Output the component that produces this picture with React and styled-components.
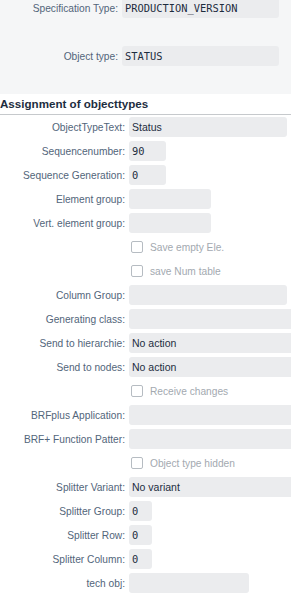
import React from 'react';
import styled, { createGlobalStyle } from 'styled-components';

const GlobalStyle = createGlobalStyle`
  html, body {
    margin: 0;
    padding: 0;
    background: #fff;
    overflow: hidden;
  }
  body {
    font-family: "Liberation Sans", Arial, sans-serif;
    color: #1d2d3e;
  }
`;

const Page = styled.div`
  width: 291px;
  overflow: hidden;
`;

const TopSection = styled.div`
  background: #f5f6f7;
  display: flex;
  flex-direction: column;
  gap: 28px;
  margin-top: -2px;
  padding-bottom: 28px;
`;

const Row = styled.div`
  display: grid;
  grid-template-columns: ${p => p.labelWidth}px auto;
  column-gap: 4px;
  align-items: center;
  height: ${p => p.height || 24}px;
`;

const Label = styled.span`
  font-size: 10.2px;
  color: #52657a;
  text-align: right;
  white-space: nowrap;
`;

const Field = styled.div`
  height: 20px;
  width: ${p => p.w}px;
  background: #ebecee;
  border-radius: 3px;
  box-sizing: border-box;
  padding: 0 3px;
  display: flex;
  align-items: center;
  font-family: ${p => (p.mono ? '"DejaVu Sans Mono", monospace' : '"Liberation Sans", Arial, sans-serif')};
  font-size: ${p => (p.mono ? '10.4px' : '10.5px')};
  color: #1d2d3e;
  white-space: nowrap;
`;

const Header = styled.h2`
  margin: 0;
  height: 21px;
  box-sizing: border-box;
  padding-top: 2px;
  font-size: 11.6px;
  font-weight: bold;
  color: #1d2d3e;
  border-bottom: 1px solid #c6c9cc;
  line-height: 15px;
`;

const Form = styled.div`
  display: flex;
  flex-direction: column;
`;

const CheckWrap = styled.label`
  display: flex;
  align-items: center;
  gap: 7px;
  font-size: 10.2px;
  color: #a3a9b0;
  padding-left: 2px;
`;

const Box = styled.span`
  width: 10px;
  height: 10px;
  border: 1px solid #b6bcc2;
  border-radius: 2px;
  background: #fff;
`;

const fields = [
  { label: 'ObjectTypeText', value: 'Status', w: 158 },
  { label: 'Sequencenumber', value: '90', w: 37, mono: true },
  { label: 'Sequence Generation', value: '0', w: 37, mono: true },
  { label: 'Element group', w: 82 },
  { label: 'Vert. element group', w: 82 },
  { check: 'Save empty Ele.' },
  { check: 'save Num table' },
  { label: 'Column Group', w: 158 },
  { label: 'Generating class', w: 200 },
  { label: 'Send to hierarchie', value: 'No action', w: 200 },
  { label: 'Send to nodes', value: 'No action', w: 200 },
  { check: 'Receive changes' },
  { label: 'BRFplus Application', w: 200 },
  { label: 'BRF+ Function Patter', w: 200 },
  { check: 'Object type hidden' },
  { label: 'Splitter Variant', value: 'No variant', w: 200 },
  { label: 'Splitter Group', value: '0', w: 23, mono: true },
  { label: 'Splitter Row', value: '0', w: 23, mono: true },
  { label: 'Splitter Column', value: '0', w: 23, mono: true },
  { label: 'tech obj', w: 120 },
];

export default function App() {
  return (
    <Page>
      <GlobalStyle />
      <TopSection>
        <Row labelWidth={118} height={20}>
          <Label>Specification Type:</Label>
          <Field w={157} mono>PRODUCTION_VERSION</Field>
        </Row>
        <Row labelWidth={118} height={20}>
          <Label>Object type:</Label>
          <Field w={157} mono>STATUS</Field>
        </Row>
      </TopSection>
      <Header>Assignment of objecttypes</Header>
      <Form>
        {fields.map((f, i) => (
          <Row labelWidth={125} key={i}>
            {f.check ? (
              <>
                <span />
                <CheckWrap>
                  <Box />
                  {f.check}
                </CheckWrap>
              </>
            ) : (
              <>
                <Label>{f.label}:</Label>
                <Field w={f.w} mono={f.mono}>{f.value}</Field>
              </>
            )}
          </Row>
        ))}
      </Form>
    </Page>
  );
}
